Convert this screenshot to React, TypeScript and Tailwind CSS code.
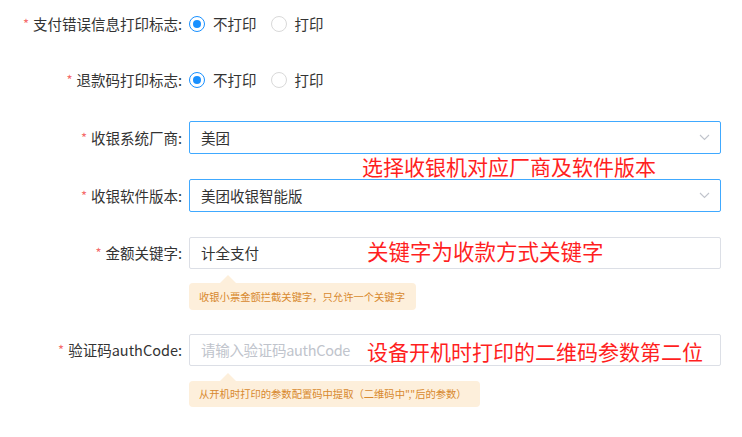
import React from "react";

const FONT = `"Noto Sans CJK SC", "Noto Sans", sans-serif`;

function Label({ text }: { text: string }) {
  return (
    <div className="w-[189px] h-8 shrink-0 flex justify-end items-center pr-[7px] text-[14.5px] text-[#333]">
      <span className="text-[#f56c6c] mr-1 text-[13px]">*</span>
      <span>{text}:</span>
    </div>
  );
}

function Radio({ checked, label }: { checked: boolean; label: string }) {
  return (
    <label className="flex items-center gap-2 mr-[14px] text-[14.5px] text-[#333]">
      <span
        className={`w-4 h-4 rounded-full border flex items-center justify-center ${
          checked ? "border-[#1890ff]" : "border-[#d9d9d9]"
        }`}
      >
        {checked && <span className="w-2 h-2 rounded-full bg-[#1890ff]" />}
      </span>
      <span>{label}</span>
    </label>
  );
}

function Chevron() {
  return (
    <svg width="11" height="7" viewBox="0 0 11 7" className="shrink-0">
      <polyline points="1,1 5.5,5.5 10,1" fill="none" stroke="#c0c4cc" strokeWidth="1.1" />
    </svg>
  );
}

function Select({ value }: { value: string }) {
  return (
    <div className="w-[532px] h-[33px] border border-[#40a9ff] rounded-[2px] flex items-center justify-between pl-[11px] pr-[10px] text-[14.5px] text-[#333]">
      <span>{value}</span>
      <Chevron />
    </div>
  );
}

function Tip({ text, width }: { text: string; width: string }) {
  return (
    <div className={`relative ${width} rounded-[4px] bg-[#fdefdb] text-[#d8892e] text-[10.3px] px-[10px] flex items-center`}>
      <span className="absolute -top-2 left-[31px] border-x-8 border-x-transparent border-b-8 border-b-[#fdefdb]" />
      {text}
    </div>
  );
}

export default function App() {
  return (
    <div className="relative w-[742px] h-[437px] bg-white" style={{ fontFamily: FONT }}>
      <div className="flex flex-col pt-2">
        {/* 支付错误信息打印标志 */}
        <div className="flex h-8">
          <Label text="支付错误信息打印标志" />
          <div className="flex items-center">
            <Radio checked label="不打印" />
            <Radio checked={false} label="打印" />
          </div>
        </div>

        {/* 退款码打印标志 */}
        <div className="flex h-8 mt-6">
          <Label text="退款码打印标志" />
          <div className="flex items-center">
            <Radio checked label="不打印" />
            <Radio checked={false} label="打印" />
          </div>
        </div>

        <div className="flex items-center mt-[25px]">
          <Label text="收银系统厂商" />
          <Select value="美团" />
        </div>

        <div className="flex items-center mt-[25px]">
          <Label text="收银软件版本" />
          <Select value="美团收银智能版" />
        </div>

        <div className="flex items-start mt-[25px]">
          <Label text="金额关键字" />
          <div className="flex flex-col">
            <div className="w-[532px] h-8 border border-[#dcdfe6] rounded-[2px] flex items-center pl-[11px] text-[14.5px] text-[#333]">
              计全支付
            </div>
            <div className="mt-[14px]">
              <Tip text="收银小票金额拦截关键字，只允许一个关键字" width="w-[227px] h-[27px]" />
            </div>
          </div>
        </div>

        <div className="flex items-start mt-6">
          <Label text="验证码authCode" />
          <div className="flex flex-col">
            <div className="w-[532px] h-8 border border-[#dcdfe6] rounded-[2px] flex items-center pl-[11px] text-[14.5px] text-[#c0c4cc] tracking-[-0.3px]">
              请输入验证码authCode
            </div>
            <div className="mt-[15px]">
              <Tip text={`从开机时打印的参数配置码中提取（二维码中","后的参数）`} width="w-[291px] h-[26px]" />
            </div>
          </div>
        </div>
      </div>

      {/* 红色批注 */}
      <div className="absolute left-[362px] top-[155px] text-[21px] leading-[23px] text-[#ff1f1f]">
        选择收银机对应厂商及软件版本
      </div>
      <div className="absolute left-[367px] top-[239px] text-[21.5px] leading-[24px] text-[#ff1f1f]">
        关键字为收款方式关键字
      </div>
      <div className="absolute left-[367px] top-[340px] text-[21px] leading-[23px] text-[#ff1f1f]">
        设备开机时打印的二维码参数第二位
      </div>
    </div>
  );
}
